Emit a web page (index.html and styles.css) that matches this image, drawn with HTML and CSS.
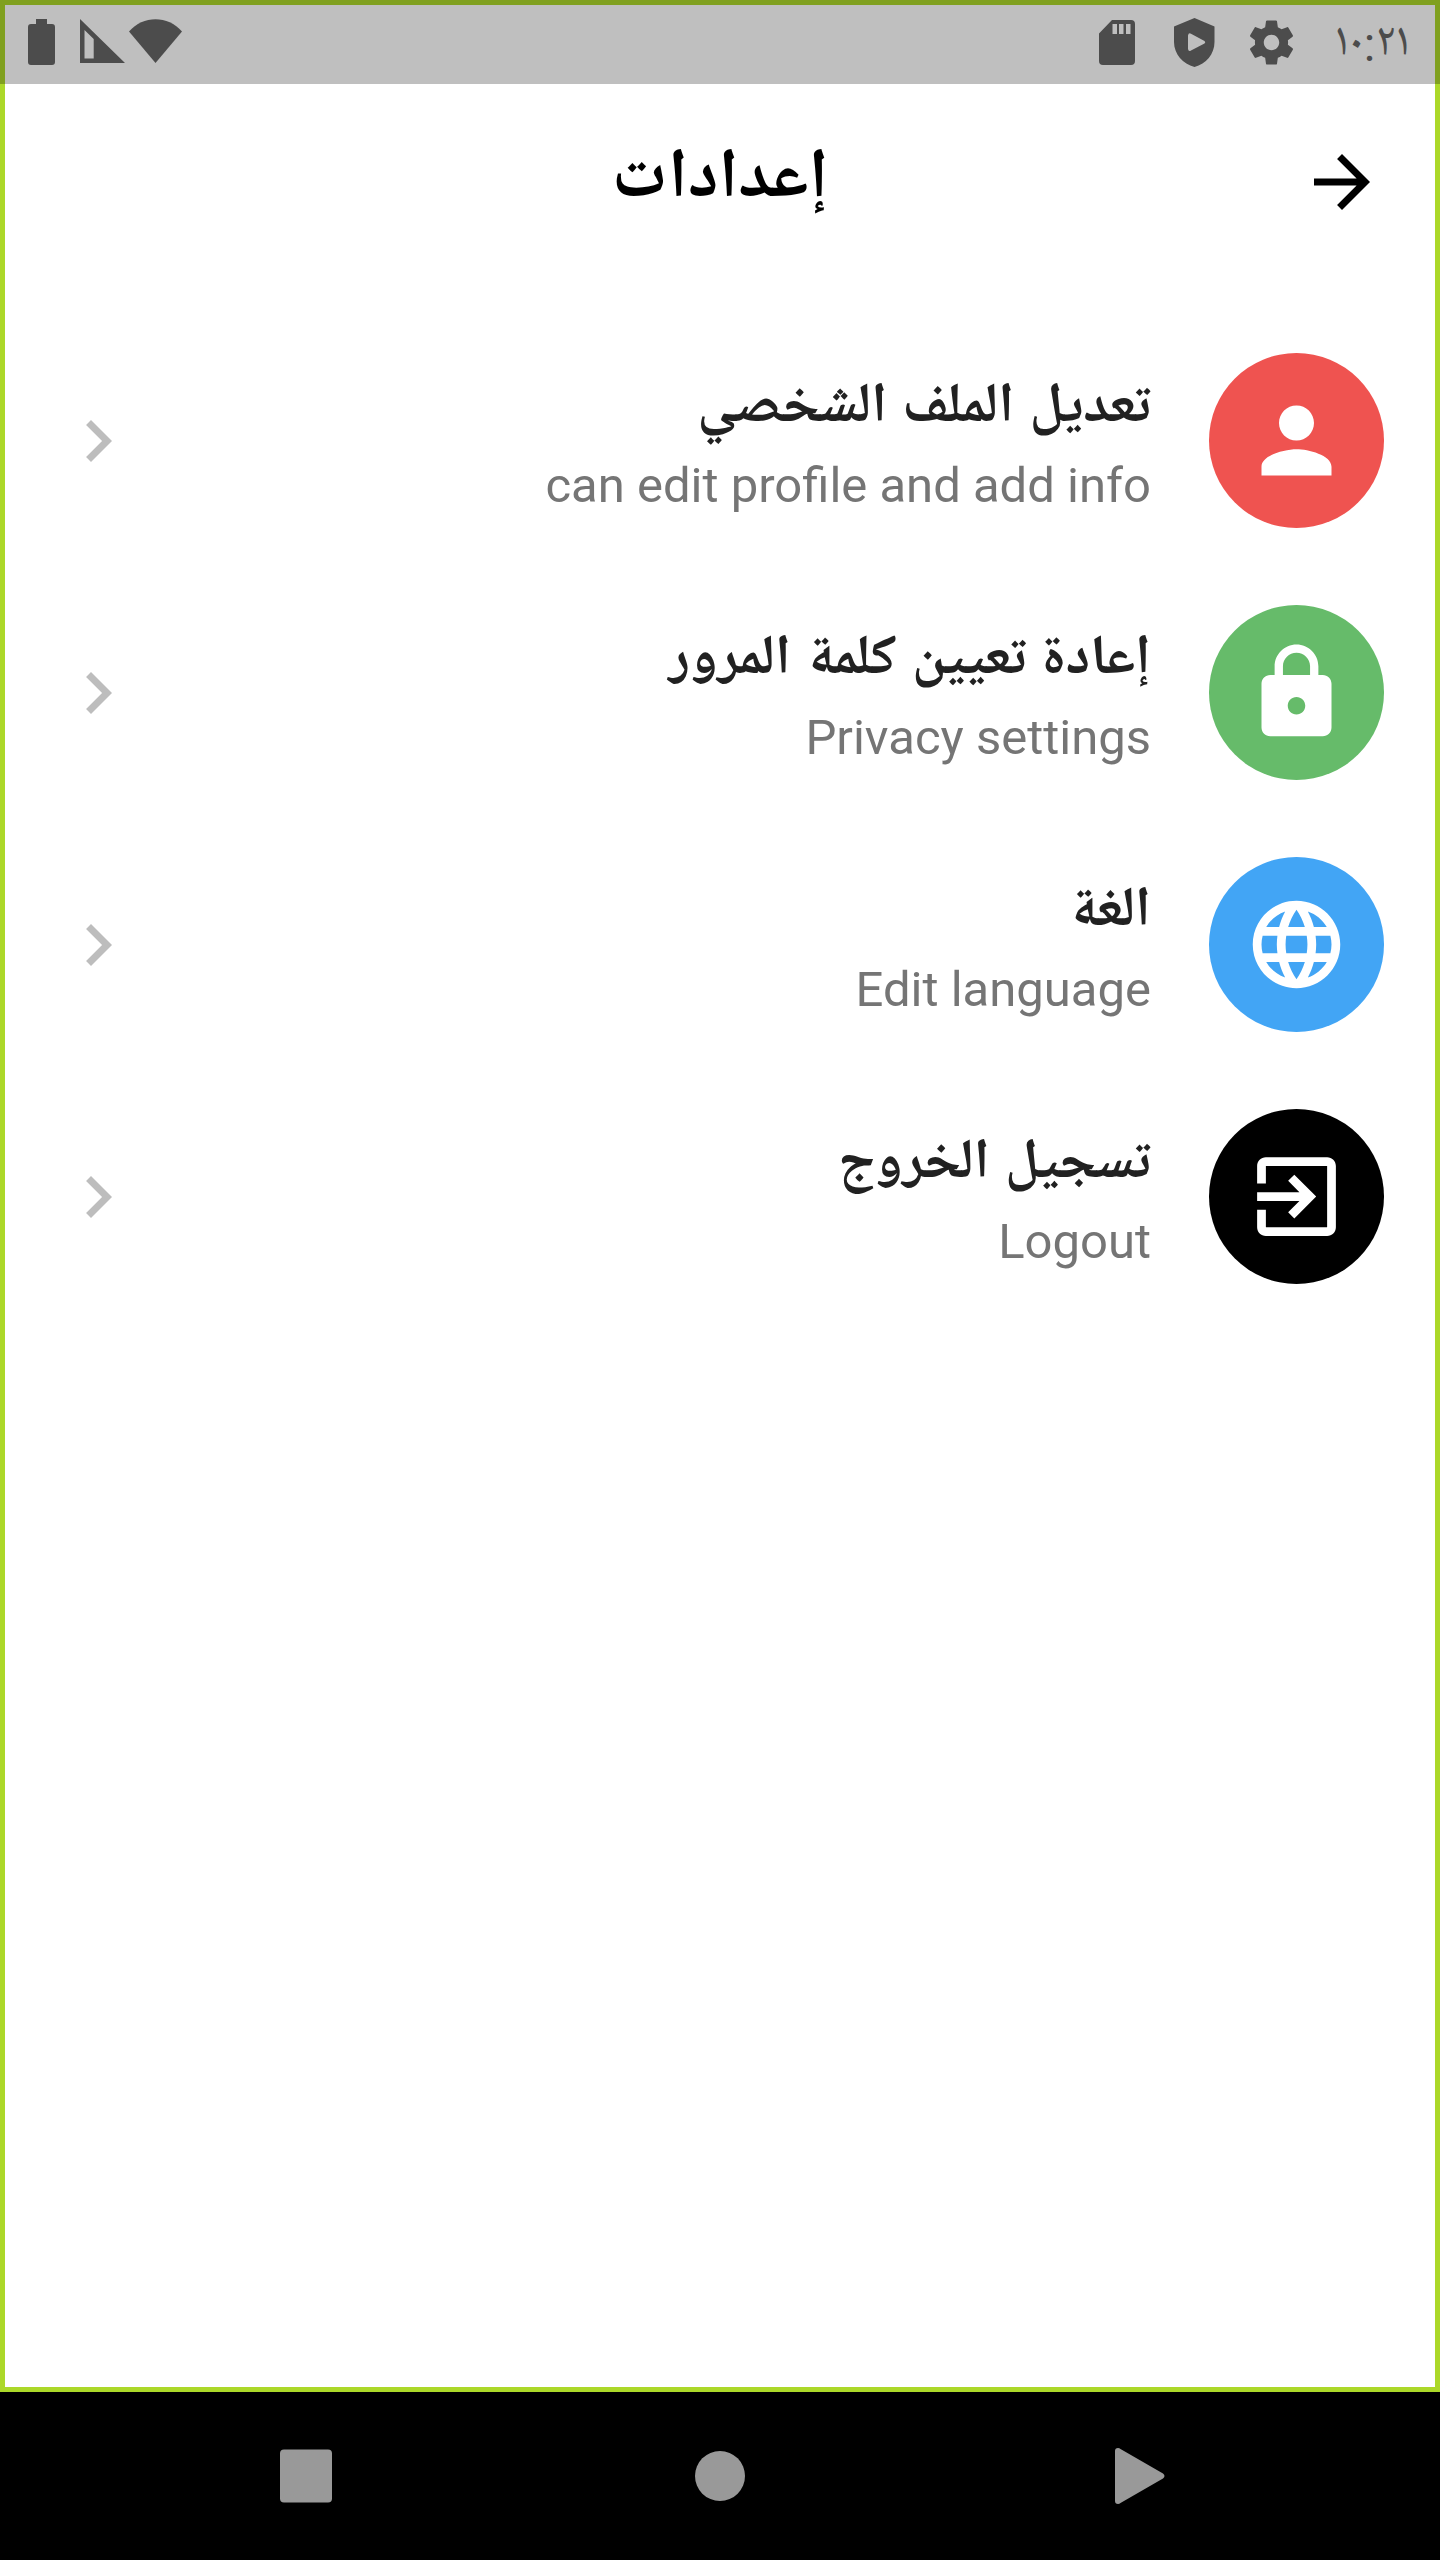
FILE: index.html
```html
<!DOCTYPE html>
<html lang="ar" dir="rtl">
<head>
<meta charset="utf-8">
<title>إعدادات</title>
<link rel="stylesheet" href="styles.css">
</head>
<body>
<div class="app">
  <header class="status">
    <span class="clock">١٠:٢١</span>
    <svg class="s-gear" viewBox="0 0 24 24"><path d="M19.430 12.980c.04-.32.07-.64.07-.98s-.03-.66-.07-.98l2.110-1.650c.19-.15.24-.42.12-.64l-2-3.460c-.12-.22-.39-.3-.61-.22l-2.490 1c-.52-.4-1.080-.73-1.690-.98l-.38-2.650C14.460 2.180 14.250 2 14 2h-4c-.25 0-.46.18-.49.42l-.38 2.650c-.61.25-1.170.59-1.690.98l-2.490-1c-.23-.09-.49 0-.61.22l-2 3.460c-.13.22-.07.49.12.64l2.110 1.650c-.04.32-.07.65-.07.98s.03.66.07.98l-2.110 1.650c-.19.15-.24.42-.12.64l2 3.460c.12.22.39.3.61.22l2.490-1c.52.4 1.080.73 1.690.98l.38 2.650c.03.24.24.42.49.42h4c.25 0 .46-.18.49-.42l.38-2.650c.61-.25 1.170-.59 1.690-.98l2.490 1c.23.09.49 0 .61-.22l2-3.460c.12-.22.07-.49-.12-.64l-2.110-1.650zM12 15.500c-1.930 0-3.500-1.570-3.500-3.500s1.570-3.500 3.500-3.500 3.500 1.570 3.500 3.500-1.570 3.500-3.500 3.500z"/></svg>
    <svg class="s-shield" viewBox="0 0 41 49"><path fill-rule="evenodd" d="M20.500 0L40.500 8.500V24C40.500 36 32 46 20.500 49C9 46 0 36 0 24V8.500zM14 17.500V31Q14.500 34 17 32.500L30.500 25.500Q32 24.300 30.500 23L17 15.700Q14.500 14.500 14 17.500z"/></svg>
    <svg class="s-card" viewBox="0 0 36 45"><path fill-rule="evenodd" d="M13 0H32Q36 0 36 4V41Q36 45 32 45H4Q0 45 0 41V13.500zM13.500 4V14H18V4zM20 4V14H24.500V4zM27 4V14H31.500V4z"/></svg>
    <div class="radio">
      <svg class="s-wifi" viewBox="0 0 53 44"><path d="M0 12.500C14-4 39-4 53 12.500L26.500 44z"/></svg>
      <svg class="s-signal" viewBox="0 0 45 44"><path fill-rule="evenodd" d="M0 0L45 44H0zM4.500 11V39.500H13.700V20z"/></svg>
      <svg class="s-battery" viewBox="0 0 27 46"><path d="M8 0H19V5H24Q27 5 27 8V43Q27 46 24 46H3Q0 46 0 43V8Q0 5 3 5H8z"/></svg>
    </div>
  </header>

  <main class="page">
    <div class="bar">
      <svg class="back" viewBox="0 0 24 24"><path d="M12 4l-1.410 1.410L16.170 11H4v2h12.170l-5.580 5.590L12 20l8-8z"/></svg>
      <h1 class="title">إعدادات</h1>
    </div>

    <ul class="list">
      <li class="row">
        <span class="avatar red"><svg viewBox="0 0 24 24"><path d="M12 12c2.210 0 4-1.790 4-4s-1.790-4-4-4-4 1.790-4 4 1.790 4 4 4zm0 2c-2.670 0-8 1.340-8 4v2h16v-2c0-2.660-5.330-4-8-4z"/></svg></span>
        <div class="text"><span class="name">تعديل الملف الشخصي</span><span class="sub" dir="ltr">can edit profile and add info</span></div>
        <svg class="chev" viewBox="0 0 24 24"><path d="M10 6L8.590 7.410 13.170 12l-4.580 4.590L10 18l6-6z"/></svg>
      </li>
      <li class="row">
        <span class="avatar green"><svg viewBox="0 0 24 24"><path d="M18 8h-1V6c0-2.760-2.240-5-5-5S7 3.240 7 6v2H6c-1.100 0-2 .9-2 2v10c0 1.100.9 2 2 2h12c1.100 0 2-.9 2-2V10c0-1.100-.9-2-2-2zm-6 9c-1.100 0-2-.9-2-2s.9-2 2-2 2 .9 2 2-.9 2-2 2zm3.100-9H8.900V6c0-1.710 1.390-3.100 3.100-3.100s3.100 1.390 3.100 3.100v2z"/></svg></span>
        <div class="text"><span class="name">إعادة تعيين كلمة المرور</span><span class="sub" dir="ltr">Privacy settings</span></div>
        <svg class="chev" viewBox="0 0 24 24"><path d="M10 6L8.590 7.410 13.170 12l-4.580 4.590L10 18l6-6z"/></svg>
      </li>
      <li class="row">
        <span class="avatar blue"><svg viewBox="0 0 24 24"><path d="M11.990 2C6.470 2 2 6.480 2 12s4.470 10 9.990 10C17.520 22 22 17.520 22 12S17.520 2 11.990 2zm6.930 6h-2.950c-.32-1.250-.78-2.450-1.380-3.560 1.840.63 3.370 1.910 4.330 3.560zM12 4.040c.83 1.200 1.480 2.530 1.910 3.960h-3.820c.43-1.430 1.080-2.760 1.910-3.960zM4.260 14C4.100 13.360 4 12.690 4 12s.1-1.360.26-2h3.380c-.08.66-.14 1.320-.14 2s.06 1.340.14 2H4.260zm.82 2h2.950c.32 1.250.78 2.450 1.380 3.560-1.840-.63-3.370-1.900-4.330-3.560zm2.950-8H5.080c.96-1.660 2.490-2.930 4.330-3.560C8.810 5.550 8.350 6.750 8.030 8zM12 19.960c-.83-1.200-1.480-2.530-1.910-3.960h3.820c-.43 1.430-1.080 2.760-1.910 3.960zM14.340 14H9.660c-.09-.66-.16-1.320-.16-2s.07-1.350.16-2h4.680c.09.65.16 1.320.16 2s-.07 1.340-.16 2zm.25 5.560c.6-1.110 1.060-2.310 1.380-3.560h2.950c-.96 1.650-2.490 2.930-4.330 3.560zM16.360 14c.08-.66.14-1.320.14-2s-.06-1.340-.14-2h3.380c.16.64.26 1.310.26 2s-.1 1.360-.26 2h-3.380z"/></svg></span>
        <div class="text"><span class="name">الغة</span><span class="sub" dir="ltr">Edit language</span></div>
        <svg class="chev" viewBox="0 0 24 24"><path d="M10 6L8.590 7.410 13.170 12l-4.580 4.590L10 18l6-6z"/></svg>
      </li>
      <li class="row">
        <span class="avatar black"><svg viewBox="0 0 24 24"><path d="M10.090 15.590L11.500 17l5-5-5-5-1.410 1.410L12.670 11H3v2h9.670l-2.580 2.590zM19 3H5c-1.110 0-2 .9-2 2v4h2V5h14v14H5v-4H3v4c0 1.100.89 2 2 2h14c1.100 0 2-.9 2-2V5c0-1.100-.9-2-2-2z"/></svg></span>
        <div class="text"><span class="name">تسجيل الخروج</span><span class="sub" dir="ltr">Logout</span></div>
        <svg class="chev" viewBox="0 0 24 24"><path d="M10 6L8.590 7.410 13.170 12l-4.580 4.590L10 18l6-6z"/></svg>
      </li>
    </ul>
  </main>

  <nav class="nav">
    <svg viewBox="0 0 60 60"><path d="M3 5Q3 2 6 2Q7.500 2 8.500 3L51 27.500Q54 30 51 32.500L8.500 57Q7.500 58 6 58Q3 58 3 55z"/></svg>
    <svg class="home" viewBox="0 0 60 60"><circle cx="30" cy="30" r="25"/></svg>
    <svg viewBox="0 0 60 60"><rect x="4" y="3.500" width="52" height="53" rx="4"/></svg>
  </nav>
</div>
</body>
</html>
```
FILE: styles.css
```css
* { box-sizing: border-box; }
body { margin: 0; background: #fff; }
.app {
  width: 1440px; height: 2560px;
  display: flex; flex-direction: column;
  font-family: Roboto, "Noto Naskh Arabic UI", "Noto Naskh Arabic", "Noto Sans Arabic", "DejaVu Sans", sans-serif;
}
.status {
  height: 84px; flex: none;
  display: flex; align-items: center;
  background: #bfbfbf;
  border: 5px solid #80a01f; border-bottom: 0;
  padding: 0 25px 5px 23px;
  fill: #4c4c4c; color: #4c4c4c;
}
.status svg { flex: none; display: block; }
.clock { width: 72px; padding-top: 5px; font-size: 47.5px; line-height: 50px; white-space: nowrap; }
.s-gear { width: 53px; height: 53px; margin-right: 40px; }
.s-shield { width: 41px; height: 49px; margin-right: 30px; }
.s-card { width: 36px; height: 45px; margin-right: 39px; }
.radio { margin-right: auto; display: flex; align-items: center; }
.s-wifi { width: 53px; height: 44px; margin-bottom: 2px; }
.s-signal { width: 45px; height: 44px; margin: 0 4px 2px 0; }
.s-battery { width: 27px; height: 46px; margin-right: 25px; }

.page {
  flex: 1;
  border: 5px solid #acd829; border-top: 0;
  background: #fff;
}
.bar {
  height: 196px;
  display: grid; grid-template-columns: 84px 1fr 84px;
  align-items: center;
  padding: 0 51px;
}
.back { width: 84px; height: 84px; fill: #000; }
.title { margin: 0; text-align: center; font-size: 70px; line-height: 90px; font-weight: 700; color: #000; }
.list { margin: 34.5px 0 0; padding: 0 51px; list-style: none; }
.row { height: 252px; display: flex; align-items: center; }
.avatar {
  width: 175px; height: 175px; flex: none; border-radius: 50%;
  display: flex; align-items: center; justify-content: center;
}
.avatar svg { width: 105px; height: 105px; fill: #fff; }
.red { background: #ef5350; }
.green { background: #66bb6a; }
.blue { background: #42a5f5; }
.black { background: #000; }
.text {
  flex: 1; margin-right: 58px; padding-top: 14px;
  display: flex; flex-direction: column; align-items: flex-start;
}
.name { font-size: 56px; line-height: 80px; font-weight: 700; word-spacing: 1.6px; color: #212121; white-space: nowrap; }
.sub { margin-top: -4px; font-size: 49px; line-height: 80px; color: #757575; white-space: nowrap; }
.chev { width: 84px; height: 84px; fill: #bdbdbd; }

.nav {
  height: 168px; flex: none; background: #000;
  display: flex; align-items: center; justify-content: space-between;
  padding: 0 268px 0 276px;
  fill: #999;
}
.nav svg { width: 60px; height: 60px; display: block; }
.nav .home { margin-right: 8px; }
```
